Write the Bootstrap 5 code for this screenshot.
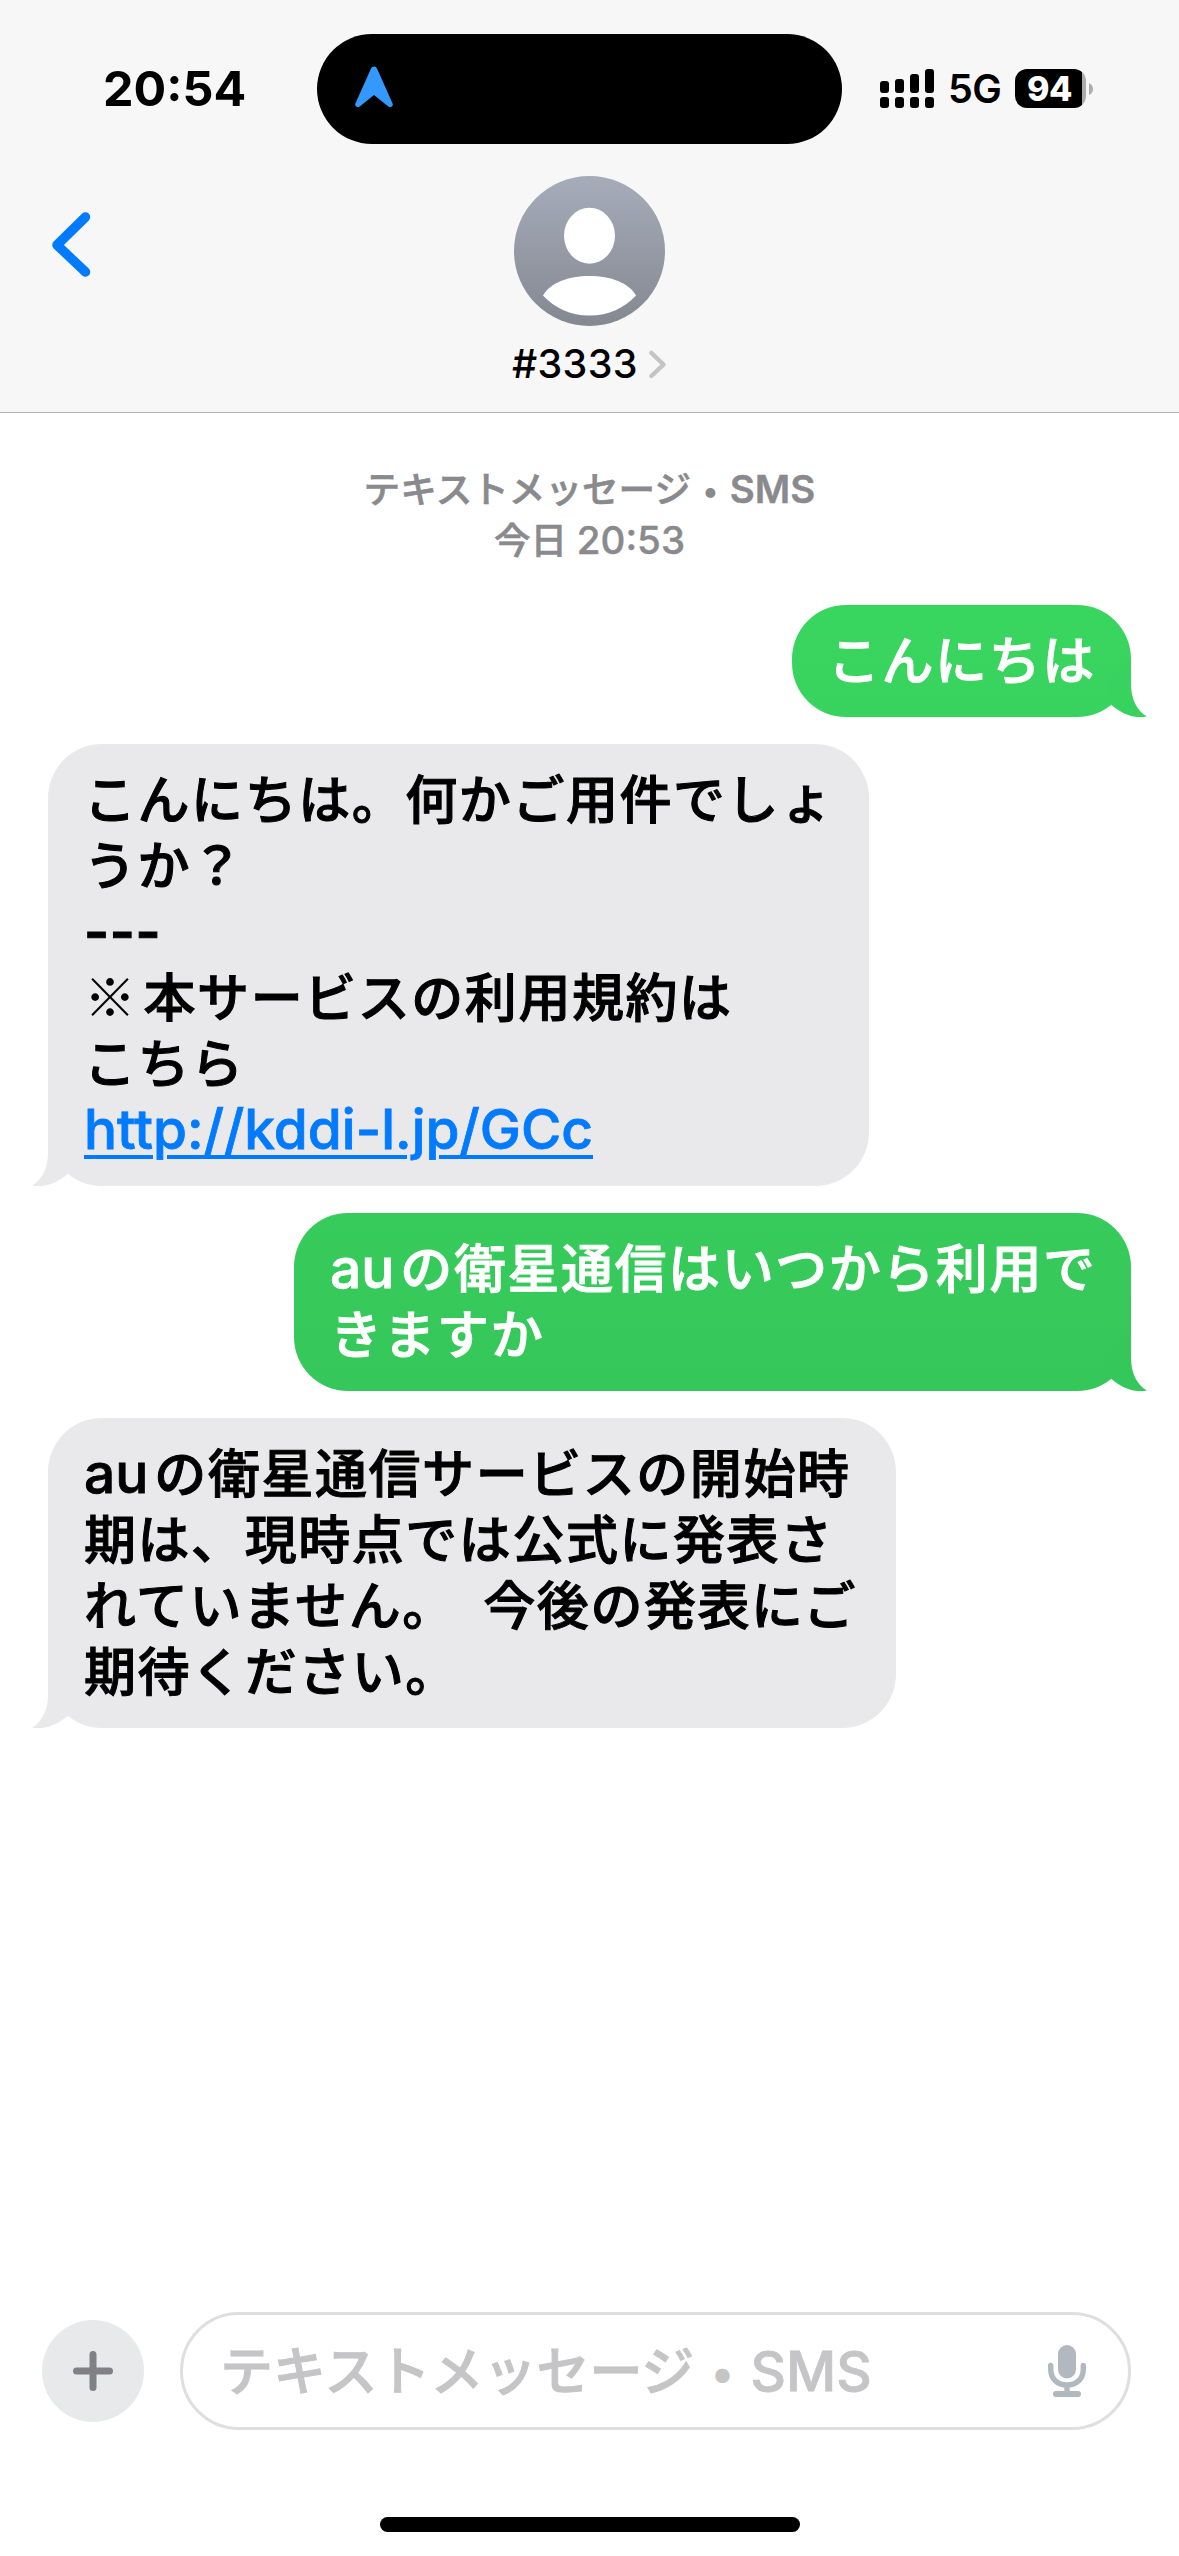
<!DOCTYPE html>
<html lang="ja">
<head>
<meta charset="utf-8">
<meta name="viewport" content="width=device-width, initial-scale=1">
<title>#3333</title>
<link href="https://cdn.jsdelivr.net/npm/bootstrap@5.3.0/dist/css/bootstrap.min.css" rel="stylesheet">
<style>
  body { font-family: Inter, "Noto Sans CJK JP", sans-serif; color: #000; background: #fff; }
  svg { display: block; flex: none; }
  .phone { width: 1179px; height: 2556px; overflow: hidden; }
  .topbar { height: 413px; background: #f7f7f7; border-bottom: 1px solid #b0b1b3; }
  .status { height: 144px; padding-top: 34px; }
  .status-left { width: 317px; padding-left: 103px; font-size: 48.500px; font-weight: 700; line-height: 109px; }
  .island { width: 525px; height: 110px; border-radius: 55px; padding-left: 38px; }
  .status-right { padding-left: 38px; height: 109px; }
  .net { font-size: 39.500px; font-weight: 600; line-height: 39px; margin: 2px 0 0 14px; width: 67px; letter-spacing: -.5px; }
  .batt { width: 71px; height: 39px; border-radius: 12px; background: linear-gradient(90deg, #000 67px, #acacae 67px); color: #fff; font-size: 34px; font-weight: 800; line-height: 39px; padding-right: 2px; letter-spacing: -.5px; }
  .contact { padding-top: 32px; }
  .back { width: 514px; padding: 35px 0 0 49px; }
  .who { font-size: 39.500px; font-weight: 500; line-height: 46px; letter-spacing: .3px; margin: 15px -2px 0 -2px; }
  .stamp { color: #8a8a8e; font-size: 36.600px; font-weight: 500; line-height: 51px; padding-top: 52px; height: 192px; -webkit-text-stroke: .6px currentColor; }
  .ltn { -webkit-text-stroke: .8px currentColor; }
  .stamp .ltn { font-size: 38.500px; line-height: 1; -webkit-text-stroke: .4px currentColor; }
  .dot-sep { font-size: .86em; line-height: 1; -webkit-text-stroke: 0; padding: 0 .04em; vertical-align: .04em; }
  .thread { gap: 27px; padding: 0 48px; }
  .bubble { position: relative; padding: 23px 36px; border-radius: 54px; font-size: 52px; line-height: 66px; letter-spacing: 1.550px; font-weight: 500; white-space: nowrap; -webkit-text-stroke: 1px currentColor; }
  .bubble .txt { padding-top: 1px; margin-bottom: -1px; }
  .bubble .ltn { letter-spacing: 0; font-size: 55px; line-height: 1; }
  .bubble .rule { letter-spacing: .6px; font-weight: 600; font-size: 54px; line-height: 1; }
  .kome { font-family: "Noto Sans CJK JP", sans-serif; font-weight: 400; line-height: 1; -webkit-text-stroke: 0; margin-right: 6px; }
  .au { margin-right: 6px; }
  .sent { color: #fff; background: linear-gradient(#39d65f, #38d35e); }
  .sent.older { background: linear-gradient(#37cb5c, #35c759); }
  .recv { background: #e9e9eb; }
  .tail { position: absolute; bottom: 0; }
  .sent .tail { right: -16px; }
  .recv .tail { left: -16px; transform: scaleX(-1); }
  .bubble a { color: #007aff; text-decoration-thickness: 4px; text-underline-offset: 6px; }
  .composer { padding: 0 48px 0 42px; gap: 36px; }
  .plus { width: 102px; height: 102px; background: #e7e9eb; }
  .field { height: 118px; border: 3px solid #dfdfdf; border-radius: 59px; padding: 2px 42px 0 37px; color: #c5c5c7; font-size: 53px; font-weight: 500; line-height: 66px; white-space: nowrap; -webkit-text-stroke: 1px currentColor; }
  .field .ltn { font-size: 55px; line-height: 1; }
  .field svg { margin-top: -2px; }
  .home { width: 420px; height: 15px; margin: 87px auto 24px; }
</style>
</head>
<body>
<div class="phone d-flex flex-column">
  <header class="topbar flex-shrink-0">
    <div class="status d-flex">
      <div class="status-left">20:54</div>
      <div class="island bg-black d-flex align-items-center">
        <svg width="38" height="42" viewBox="0 0 38 42" style="margin-top:-4px"><path d="M16 2.500 C17 -.3 21 -.3 22 2.500 L37.600 37.500 C38.600 40.500 35.500 42.300 33 40.300 L19 29 L5 40.300 C2.500 42.300 -.6 40.500 .4 37.500 Z" fill="#3399ff"/></svg>
      </div>
      <div class="status-right d-flex align-items-center">
        <svg width="54" height="40" viewBox="0 0 54 40"><g><rect x="0" y="12" width="9" height="12" rx="3"/><rect x="15" y="10" width="9" height="14" rx="3"/><rect x="30" y="5" width="9" height="19" rx="3"/><rect x="45" y="0" width="9" height="24" rx="3"/><rect x="0" y="28" width="9" height="11" rx="3"/><rect x="15" y="28" width="9" height="11" rx="3"/><rect x="30" y="28" width="9" height="11" rx="3"/><rect x="45" y="28" width="9" height="11" rx="3"/></g></svg>
        <div class="net">5G</div>
        <div class="batt text-center">94</div>
        <svg width="4" height="12" viewBox="0 0 4 12" style="margin-left:3px"><path d="M0 0 Q4 2 4 6 Q4 10 0 12Z" fill="#acacae"/></svg>
      </div>
    </div>
    <div class="contact d-flex">
      <div class="back">
        <svg width="42" height="66" viewBox="0 0 42 66"><path d="M36.500 6 L8 34 L36.500 61" fill="none" stroke="#007aff" stroke-width="9.500" stroke-linecap="round" stroke-linejoin="round"/></svg>
      </div>
      <div class="d-flex flex-column">
        <svg width="151" height="150" viewBox="0 0 151 150">
          <defs><linearGradient id="av" x1="0" y1="0" x2="0" y2="1"><stop offset="0" stop-color="#a6acba"/><stop offset="1" stop-color="#848891"/></linearGradient></defs>
          <ellipse cx="75.500" cy="75" rx="75.500" ry="75" fill="url(#av)"/>
          <ellipse cx="75.500" cy="59.700" rx="25.500" ry="28" fill="#fff"/>
          <path d="M29 119.500 C36 107 54 100 75.500 100 S115 107 122 119.500 C110 132 95 139.500 75.500 139.500 S41 132 29 119.500Z" fill="#fff"/>
        </svg>
        <div class="who d-flex align-items-center"><span>#3333</span>
          <svg width="19" height="29" viewBox="0 0 19 29" class="ms-auto"><path d="M3.500 3 L15.500 14.500 L3.500 26" fill="none" stroke="#c4c4c6" stroke-width="4.500" stroke-linecap="round" stroke-linejoin="round"/></svg>
        </div>
      </div>
    </div>
  </header>

  <main class="flex-grow-1">
    <div class="stamp text-center">
      <div>テキストメッセージ <span class="dot-sep">•</span> <span class="ltn fw-semibold">SMS</span></div>
      <div>今日 <span class="ltn">20:53</span></div>
    </div>
    <div class="thread d-flex flex-column">
      <div class="bubble sent align-self-end" style="width:339px"><div class="txt">こんにちは</div>
        <svg class="tail" width="60" height="60" viewBox="0 0 60 60"><path d="M44 0 V27 C44 42 50 54 60 59.500 C47 62 35 57 24.500 48 L20 25 Z" fill="#38d35e"/></svg>
      </div>
      <div class="bubble recv align-self-start" style="width:821px"><div class="txt">こんにちは。何かご用件でしょ<br>うか？<br><span class="rule">---</span><br><span class="kome">※</span>本サービスの利用規約は<br>こちら<br><a href="#" class="ltn">http://kddi-l.jp/GCc</a></div>
        <svg class="tail" width="60" height="60" viewBox="0 0 60 60"><path d="M44 0 V27 C44 42 50 54 60 59.500 C47 62 35 57 24.500 48 L20 25 Z" fill="#e9e9eb"/></svg>
      </div>
      <div class="bubble sent older align-self-end" style="width:837px"><div class="txt"><span class="ltn au">au</span>の衛星通信はいつから利用で<br>きますか</div>
        <svg class="tail" width="60" height="60" viewBox="0 0 60 60"><path d="M44 0 V27 C44 42 50 54 60 59.500 C47 62 35 57 24.500 48 L20 25 Z" fill="#35c759"/></svg>
      </div>
      <div class="bubble recv align-self-start" style="width:848px"><div class="txt"><span class="ltn au">au</span>の衛星通信サービスの開始時<br>期は、現時点では公式に発表さ<br>れていません。　今後の発表にご<br>期待ください。</div>
        <svg class="tail" width="60" height="60" viewBox="0 0 60 60"><path d="M44 0 V27 C44 42 50 54 60 59.500 C47 62 35 57 24.500 48 L20 25 Z" fill="#e9e9eb"/></svg>
      </div>
    </div>
  </main>

  <footer class="flex-shrink-0">
    <div class="composer d-flex align-items-center">
      <div class="plus rounded-circle d-flex align-items-center justify-content-center flex-shrink-0">
        <svg width="40" height="40" viewBox="0 0 40 40"><path d="M20 3.500V36.500M3.500 20H36.500" stroke="#808085" stroke-width="7" stroke-linecap="round"/></svg>
      </div>
      <div class="field flex-grow-1 d-flex align-items-center justify-content-between">
        <span>テキストメッセージ <span class="dot-sep">•</span> <span class="ltn">SMS</span></span>
        <svg width="38" height="52" viewBox="0 0 38 52"><rect x="10" y="0" width="18" height="33.500" rx="9" fill="#b2b8c0"/><path d="M2.700 20.500V24C2.700 34 9.500 40 19 40S35.300 34 35.300 24V20.500M19 40V49" fill="none" stroke="#b2b8c0" stroke-width="5.400" stroke-linecap="round"/><rect x="5" y="46" width="28" height="6" rx="3" fill="#b2b8c0"/></svg>
      </div>
    </div>
    <div class="home bg-black rounded-pill"></div>
  </footer>
</div>
<script src="https://cdn.jsdelivr.net/npm/bootstrap@5.3.0/dist/js/bootstrap.bundle.min.js"></script>
</body>
</html>
